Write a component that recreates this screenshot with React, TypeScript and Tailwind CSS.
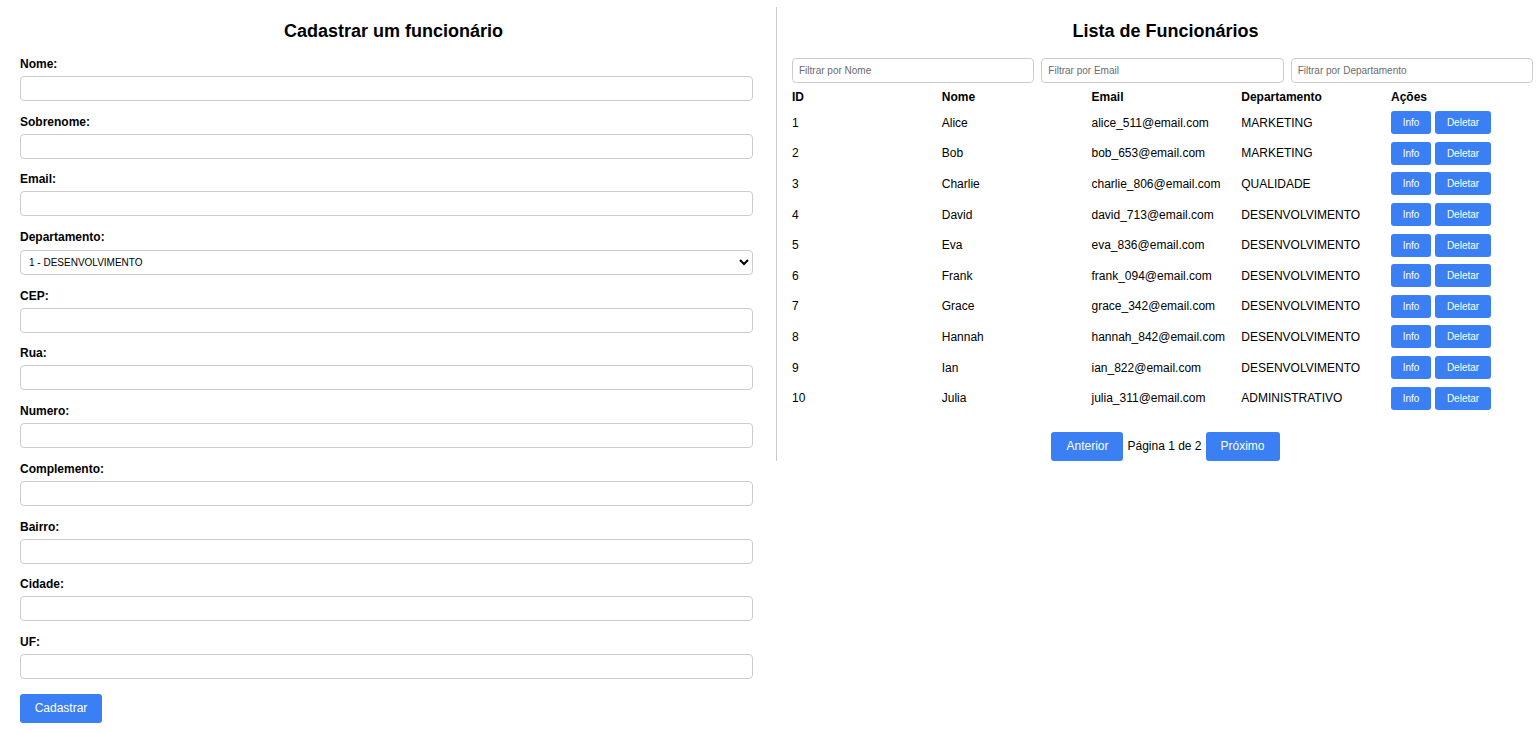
import { useState } from "react";

const fields = [
  "Nome",
  "Sobrenome",
  "Email",
  "Departamento",
  "CEP",
  "Rua",
  "Numero",
  "Complemento",
  "Bairro",
  "Cidade",
  "UF",
];

const funcionarios = [
  { id: 1, nome: "Alice", email: "alice_511@email.com", dep: "MARKETING" },
  { id: 2, nome: "Bob", email: "bob_653@email.com", dep: "MARKETING" },
  { id: 3, nome: "Charlie", email: "charlie_806@email.com", dep: "QUALIDADE" },
  { id: 4, nome: "David", email: "david_713@email.com", dep: "DESENVOLVIMENTO" },
  { id: 5, nome: "Eva", email: "eva_836@email.com", dep: "DESENVOLVIMENTO" },
  { id: 6, nome: "Frank", email: "frank_094@email.com", dep: "DESENVOLVIMENTO" },
  { id: 7, nome: "Grace", email: "grace_342@email.com", dep: "DESENVOLVIMENTO" },
  { id: 8, nome: "Hannah", email: "hannah_842@email.com", dep: "DESENVOLVIMENTO" },
  { id: 9, nome: "Ian", email: "ian_822@email.com", dep: "DESENVOLVIMENTO" },
  { id: 10, nome: "Julia", email: "julia_311@email.com", dep: "ADMINISTRATIVO" },
];

function CadastroForm() {
  return (
    <div className="w-[776px] shrink-0 pl-5 pr-[9px] pt-[21px]">
      <h2 className="text-center text-[18px] font-bold leading-[21px] text-black mb-[14px]">
        Cadastrar um funcionário
      </h2>
      <form onSubmit={(e) => e.preventDefault()}>
        {fields.map((f) => (
          <div key={f} className="mb-[12.7px]">
            <label className="block text-[12px] font-bold leading-[16px] text-black mb-[4px]">
              {f}:
            </label>
            {f === "Departamento" ? (
              <select className="w-[733px] h-[25px] border border-[#cccccc] rounded-[4px] bg-white px-[4px] text-[10px] text-black">
                <option>1 - DESENVOLVIMENTO</option>
                <option>2 - MARKETING</option>
                <option>3 - QUALIDADE</option>
                <option>4 - ADMINISTRATIVO</option>
              </select>
            ) : (
              <input
                type="text"
                className="block w-[733px] h-[25px] border border-[#cccccc] rounded-[4px] px-[5px] text-[12px]"
              />
            )}
          </div>
        ))}
        <button
          type="submit"
          className="mt-[2px] w-[82px] h-[29px] rounded-[3px] bg-[#3b7ff5] text-white text-[12px]"
        >
          Cadastrar
        </button>
      </form>
    </div>
  );
}

function ListaFuncionarios() {
  const [filtros, setFiltros] = useState({ nome: "", email: "", dep: "" });

  const lista = funcionarios.filter(
    (f) =>
      f.nome.toLowerCase().includes(filtros.nome.toLowerCase()) &&
      f.email.toLowerCase().includes(filtros.email.toLowerCase()) &&
      f.dep.toLowerCase().includes(filtros.dep.toLowerCase())
  );

  return (
    <div className="flex-1 mt-[7px] border-l border-[#cccccc] pl-[15px] pr-[4px] pt-[14px]">
      <h2 className="text-center text-[18px] font-bold leading-[21px] text-black mb-[16px] pl-[6px]">
        Lista de Funcionários
      </h2>
      <div className="flex gap-[7px]">
        <input
          placeholder="Filtrar por Nome"
          value={filtros.nome}
          onChange={(e) => setFiltros({ ...filtros, nome: e.target.value })}
          className="flex-1 min-w-0 h-[25px] border border-[#cccccc] rounded-[4px] px-[6px] text-[10px] placeholder:text-[#6b6b6b]"
        />
        <input
          placeholder="Filtrar por Email"
          value={filtros.email}
          onChange={(e) => setFiltros({ ...filtros, email: e.target.value })}
          className="flex-1 min-w-0 h-[25px] border border-[#cccccc] rounded-[4px] px-[6px] text-[10px] placeholder:text-[#6b6b6b]"
        />
        <input
          placeholder="Filtrar por Departamento"
          value={filtros.dep}
          onChange={(e) => setFiltros({ ...filtros, dep: e.target.value })}
          className="flex-1 min-w-0 h-[25px] border border-[#cccccc] rounded-[4px] px-[6px] text-[10px] placeholder:text-[#6b6b6b]"
        />
      </div>
      <div className="mt-[2.5px] text-[12px] text-black">
        <div className="grid grid-cols-[149.75px_149.75px_149.75px_149.75px_1fr] items-center h-[22px] font-bold">
          <span>ID</span>
          <span>Nome</span>
          <span>Email</span>
          <span>Departamento</span>
          <span>Ações</span>
        </div>
        {lista.map((f) => (
          <div
            key={f.id}
            className="grid grid-cols-[149.75px_149.75px_149.75px_149.75px_1fr] items-center h-[30.6px]"
          >
            <span>{f.id}</span>
            <span>{f.nome}</span>
            <span>{f.email}</span>
            <span>{f.dep}</span>
            <span className="flex gap-[4px]">
              <button className="w-[40px] h-[23px] rounded-[3px] bg-[#3b7ff5] text-white text-[10px]">
                Info
              </button>
              <button className="w-[56px] h-[23px] rounded-[3px] bg-[#3b7ff5] text-white text-[10px]">
                Deletar
              </button>
            </span>
          </div>
        ))}
      </div>
      <div className="flex items-center justify-center gap-[4px] mt-[18.5px] text-[12px] pl-[6px]">
        <button className="w-[72px] h-[29px] rounded-[3px] bg-[#3b7ff5] text-white">Anterior</button>
        <span className="text-black">Página 1 de 2</span>
        <button className="w-[74px] h-[29px] rounded-[3px] bg-[#3b7ff5] text-white">Próximo</button>
      </div>
    </div>
  );
}

export default function App() {
  return (
    <div className="flex items-start bg-white min-h-screen font-['Liberation_Sans',Arial,sans-serif]">
      <CadastroForm />
      <ListaFuncionarios />
    </div>
  );
}
